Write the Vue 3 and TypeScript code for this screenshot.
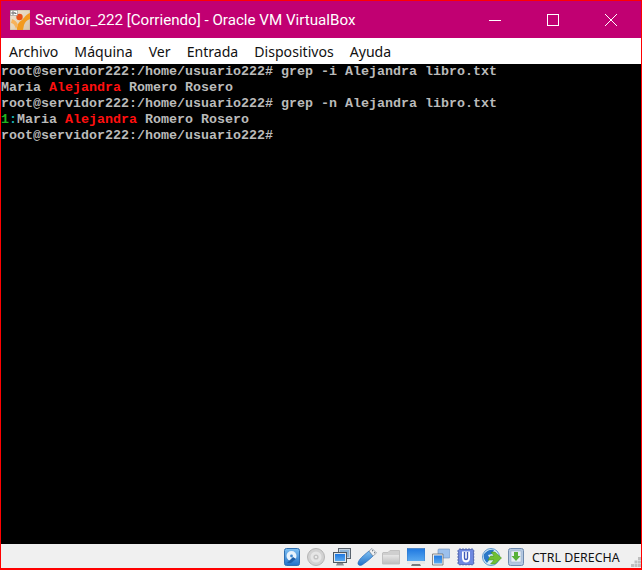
<script setup lang="ts">
const menus: string[] = ['Archivo', 'Máquina', 'Ver', 'Entrada', 'Dispositivos', 'Ayuda']
</script>

<template>
  <div class="window">
    <header class="titlebar">
      <svg class="app-icon" width="20" height="20" viewBox="0 0 20 20">
        <defs>
          <linearGradient id="appbg" x1="0" y1="0" x2="1" y2="1">
            <stop offset="0" stop-color="#f3e6d4" />
            <stop offset="1" stop-color="#d8c4a8" />
          </linearGradient>
        </defs>
        <rect width="20" height="20" fill="url(#appbg)" stroke="#b7a88f" stroke-width="0.6" />
        <path d="M7 20 C7 14 9 12 12 10 C14 8.5 15 5 20 3 V9 C17 10 15 12 14 15 L13 20 Z" fill="#f39a1e" />
        <path d="M2 9 C5 10 7 12 8 15 L6 19 C5 15 3 13 1 13 Z" fill="#f6b25b" />
        <circle cx="9.5" cy="7" r="3.2" fill="#e8521a" />
        <rect x="0.5" y="0.5" width="7" height="5" fill="#fff" stroke="#777" stroke-width="0.5" />
        <path d="M2 2 H4 V4 H2 Z M5 2 V3.5 H6.5" fill="none" stroke="#444" stroke-width="0.7" />
      </svg>
      <span class="title">Servidor_222 [Corriendo] - Oracle VM VirtualBox</span>
      <div class="controls">
        <div class="ctl"><svg width="14" height="14" viewBox="0 0 14 14"><path d="M1 7.5 H13" stroke="#fff" stroke-width="1" /></svg></div>
        <div class="ctl"><svg width="14" height="14" viewBox="0 0 14 14"><rect x="1.5" y="1.5" width="11" height="11" fill="none" stroke="#fff" stroke-width="1" /></svg></div>
        <div class="ctl"><svg width="14" height="14" viewBox="0 0 14 14"><path d="M1 1 L13 13 M13 1 L1 13" stroke="#fff" stroke-width="1" /></svg></div>
      </div>
    </header>

    <nav class="menubar">
      <span v-for="m in menus" :key="m" class="menu">{{ m }}</span>
    </nav>

    <main class="terminal">
      <div class="line">root@servidor222:/home/usuario222# grep -i Alejandra libro.txt</div>
      <div class="line">Maria <span class="red">Alejandra</span> Romero Rosero</div>
      <div class="line">root@servidor222:/home/usuario222# grep -n Alejandra libro.txt</div>
      <div class="line"><span class="green">1</span><span class="cyan">:</span>Maria <span class="red">Alejandra</span> Romero Rosero</div>
      <div class="line">root@servidor222:/home/usuario222#</div>
    </main>

    <footer class="statusbar">
      <!-- hard disk -->
      <svg class="ico w16" viewBox="0 0 16 18">
        <defs>
          <linearGradient id="blue" x1="0" y1="0" x2="0" y2="1">
            <stop offset="0" stop-color="#7fc0f2" />
            <stop offset="1" stop-color="#2272c8" />
          </linearGradient>
          <linearGradient id="screen" x1="0" y1="0" x2="0" y2="1">
            <stop offset="0" stop-color="#1f78e0" />
            <stop offset="1" stop-color="#5aaaf0" />
          </linearGradient>
          <linearGradient id="grey" x1="0" y1="0" x2="0" y2="1">
            <stop offset="0" stop-color="#e6e6e6" />
            <stop offset="1" stop-color="#bdbdbd" />
          </linearGradient>
        </defs>
        <rect x="0.5" y="0.5" width="15" height="17" rx="2" fill="url(#blue)" stroke="#2f6fb0" />
        <circle cx="7.5" cy="8" r="5" fill="#e8f3fc" />
        <circle cx="7.5" cy="8" r="1.4" fill="#3b86d0" />
        <path d="M3 15 L9 9 L12 11 L7 15 Z" fill="#1d5fa8" />
      </svg>
      <!-- optical disc -->
      <svg class="ico w18 m8" viewBox="0 0 18 18">
        <circle cx="9" cy="9" r="8.5" fill="#d2d2d2" stroke="#b5b5b5" />
        <circle cx="9" cy="9" r="5.5" fill="#e6e6e6" />
        <circle cx="9" cy="9" r="2.6" fill="#c4c4c4" />
        <circle cx="9" cy="9" r="1.1" fill="#f4f4f4" />
      </svg>
      <!-- network -->
      <svg class="ico w18 m6" viewBox="0 0 18 18">
        <rect x="5.5" y="0.5" width="12" height="10" fill="#c5d3e0" stroke="#59636d" />
        <rect x="7" y="2" width="9" height="7" fill="#8db4d8" />
        <rect x="0.5" y="4.5" width="13" height="10" fill="#dfe6ec" stroke="#4f5961" />
        <rect x="2" y="6" width="10" height="7" fill="url(#screen)" />
        <path d="M3 17.5 H11 L10 15 H4 Z" fill="#8a8f94" />
      </svg>
      <!-- usb -->
      <svg class="ico w20 m5" viewBox="0 0 20 18">
        <path d="M1 15 C2 11 6 8 12 3 L16 8 C12 12 8 15 5 17 C3 18 0.5 17 1 15 Z" fill="url(#blue)" stroke="#2a6cb8" stroke-width="0.7" />
        <path d="M12 3 L15 0.5 L19.5 5 L16 8 Z" fill="#f1f1f1" stroke="#7c8b99" stroke-width="0.7" />
        <path d="M15 3 L16 2.5 M17 5 L18 4.5" stroke="#55606b" stroke-width="1" />
      </svg>
      <!-- folder -->
      <svg class="ico w18" viewBox="0 0 18 18">
        <path d="M0.5 5 V16 H17.5 V2.5 H8 L6 4.5 H1 Z" fill="#cfcfcf" stroke="#c0c0c0" />
        <rect x="1" y="7" width="16" height="9" fill="url(#grey)" />
      </svg>
      <!-- display -->
      <svg class="ico w18" viewBox="0 0 18 18">
        <rect x="0" y="0.5" width="18" height="13" fill="url(#screen)" stroke="#2c6cb6" stroke-width="0.6" />
        <rect x="0" y="13" width="18" height="3" fill="#e8e8e8" />
        <path d="M4 18 H14 L13 16 H5 Z" fill="#77797c" />
      </svg>
      <!-- shared clipboard -->
      <svg class="ico w18" viewBox="0 0 18 18">
        <rect x="6" y="1" width="12" height="9" rx="1" fill="#9cc0ec" stroke="#6d8fbe" stroke-width="0.6" />
        <path d="M0.5 6 H11 V17 H0.5 Z" fill="#f2f2f2" stroke="#5c5c5c" stroke-width="0.7" />
        <rect x="2" y="7.5" width="8" height="8" fill="url(#screen)" />
      </svg>
      <!-- cpu -->
      <svg class="ico w18" viewBox="0 0 18 18">
        <path d="M3 0 V18 M6 0 V18 M9 0 V18 M12 0 V18 M15 0 V18 M0 3 H18 M0 6 H18 M0 9 H18 M0 12 H18 M0 15 H18" stroke="#5a74c4" stroke-width="1" stroke-dasharray="1.5 1" />
        <rect x="1.5" y="1.5" width="15" height="15" rx="1" fill="#6d88e0" stroke="#3d54a6" stroke-width="0.7" />
        <path d="M5 3.5 H13 V10 C13 13 11 14.5 9 14.5 C7 14.5 5 13 5 10 Z" fill="#fff" />
        <path d="M7.5 4 V10 C7.5 12 10.5 12 10.5 10 V4" fill="none" stroke="#3f5ab8" stroke-width="1.4" />
      </svg>
      <!-- globe -->
      <svg class="ico w20 m6" viewBox="0 0 20 18">
        <circle cx="9" cy="9" r="8.5" fill="#d9edf8" stroke="#3a83c4" stroke-width="0.8" />
        <path d="M2 6 C5 2 9 1 12 2 L10 6 L6 7 L8 11 L5 15 C2 12 1 9 2 6 Z" fill="#2a78c8" />
        <path d="M9 4 H13 L19.5 10 L13 16 H8.5 L12 12 H6 L8.5 8 H12 Z" fill="#6fbf35" stroke="#3f8a1c" stroke-width="0.5" />
      </svg>
      <!-- download -->
      <svg class="ico w16" viewBox="0 0 16 18">
        <rect x="0.5" y="0.5" width="15" height="17" rx="2" fill="#b4c9e2" stroke="#6e8aad" />
        <rect x="3" y="3" width="10" height="11" fill="#e9eff6" stroke="#93a9c4" stroke-width="0.5" />
        <path d="M6 4 H10 V8 H12.5 L8 13 L3.5 8 H6 Z" fill="#58b13a" />
      </svg>
      <span class="host">CTRL DERECHA</span>
      <svg class="grip" width="10" height="10" viewBox="0 0 10 10">
        <rect x="7" y="0" width="3" height="3" fill="#bfbfbf" />
        <rect x="3.5" y="3.5" width="3" height="3" fill="#bfbfbf" />
        <rect x="7" y="3.5" width="3" height="3" fill="#bfbfbf" />
        <rect x="0" y="7" width="3" height="3" fill="#bfbfbf" />
        <rect x="3.5" y="7" width="3" height="3" fill="#bfbfbf" />
        <rect x="7" y="7" width="3" height="3" fill="#bfbfbf" />
      </svg>
    </footer>
  </div>
</template>

<style scoped>
.window {
  width: 642px;
  height: 570px;
  box-sizing: border-box;
  border: 1px solid #ff0000;
  border-bottom-width: 2px;
  display: flex;
  flex-direction: column;
  overflow: hidden;
  font-family: "Noto Sans", "Open Sans", sans-serif;
}
.titlebar {
  height: 37px;
  background: #c10072;
  color: #fff;
  display: flex;
  align-items: center;
  padding-left: 9px;
  flex: none;
}
.app-icon {
  flex: none;
  margin-top: 1px;
}
.title {
  margin-left: 5px;
  font-family: Roboto, "Noto Sans", sans-serif;
  font-size: 15.15px;
  white-space: nowrap;
}
.controls {
  margin-left: auto;
  display: flex;
  margin-right: 1px;
}
.ctl {
  width: 58px;
  display: flex;
  align-items: center;
  justify-content: center;
}
.menubar {
  height: 26px;
  background: #fff;
  display: flex;
  align-items: center;
  gap: 16px;
  padding-left: 8px;
  font-size: 14.1px;
  color: #111;
  flex: none;
}
.terminal {
  flex: 1;
  background: #000;
  color: #bababa;
  font-family: "Liberation Mono", "DejaVu Sans Mono", monospace;
  font-weight: 700;
  font-size: 13.333px;
  line-height: 16px;
  white-space: pre;
}
.line {
  height: 16px;
}
.red {
  color: #ff0f0f;
}
.green {
  color: #1fb41f;
}
.cyan {
  color: #18b2b2;
}
.statusbar {
  height: 24px;
  box-sizing: border-box;
  padding-top: 2px;
  flex: none;
  background: #f0f0f0;
  display: flex;
  align-items: center;
  padding-left: 283px;
  position: relative;
}
.ico {
  height: 18px;
  flex: none;
  margin-right: 7px;
}
.w16 {
  width: 16px;
}
.w18 {
  width: 18px;
}
.w20 {
  width: 20px;
}
.m8 {
  margin-right: 8px;
}
.m6 {
  margin-right: 6px;
}
.m5 {
  margin-right: 5px;
}
.host {
  font-size: 12.4px;
  color: #111;
  white-space: nowrap;
  margin-left: 1px;
}
.grip {
  position: absolute;
  right: 0;
  bottom: 1px;
}
</style>

<style>
html,
body {
  margin: 0;
  background: #fff;
}
</style>
